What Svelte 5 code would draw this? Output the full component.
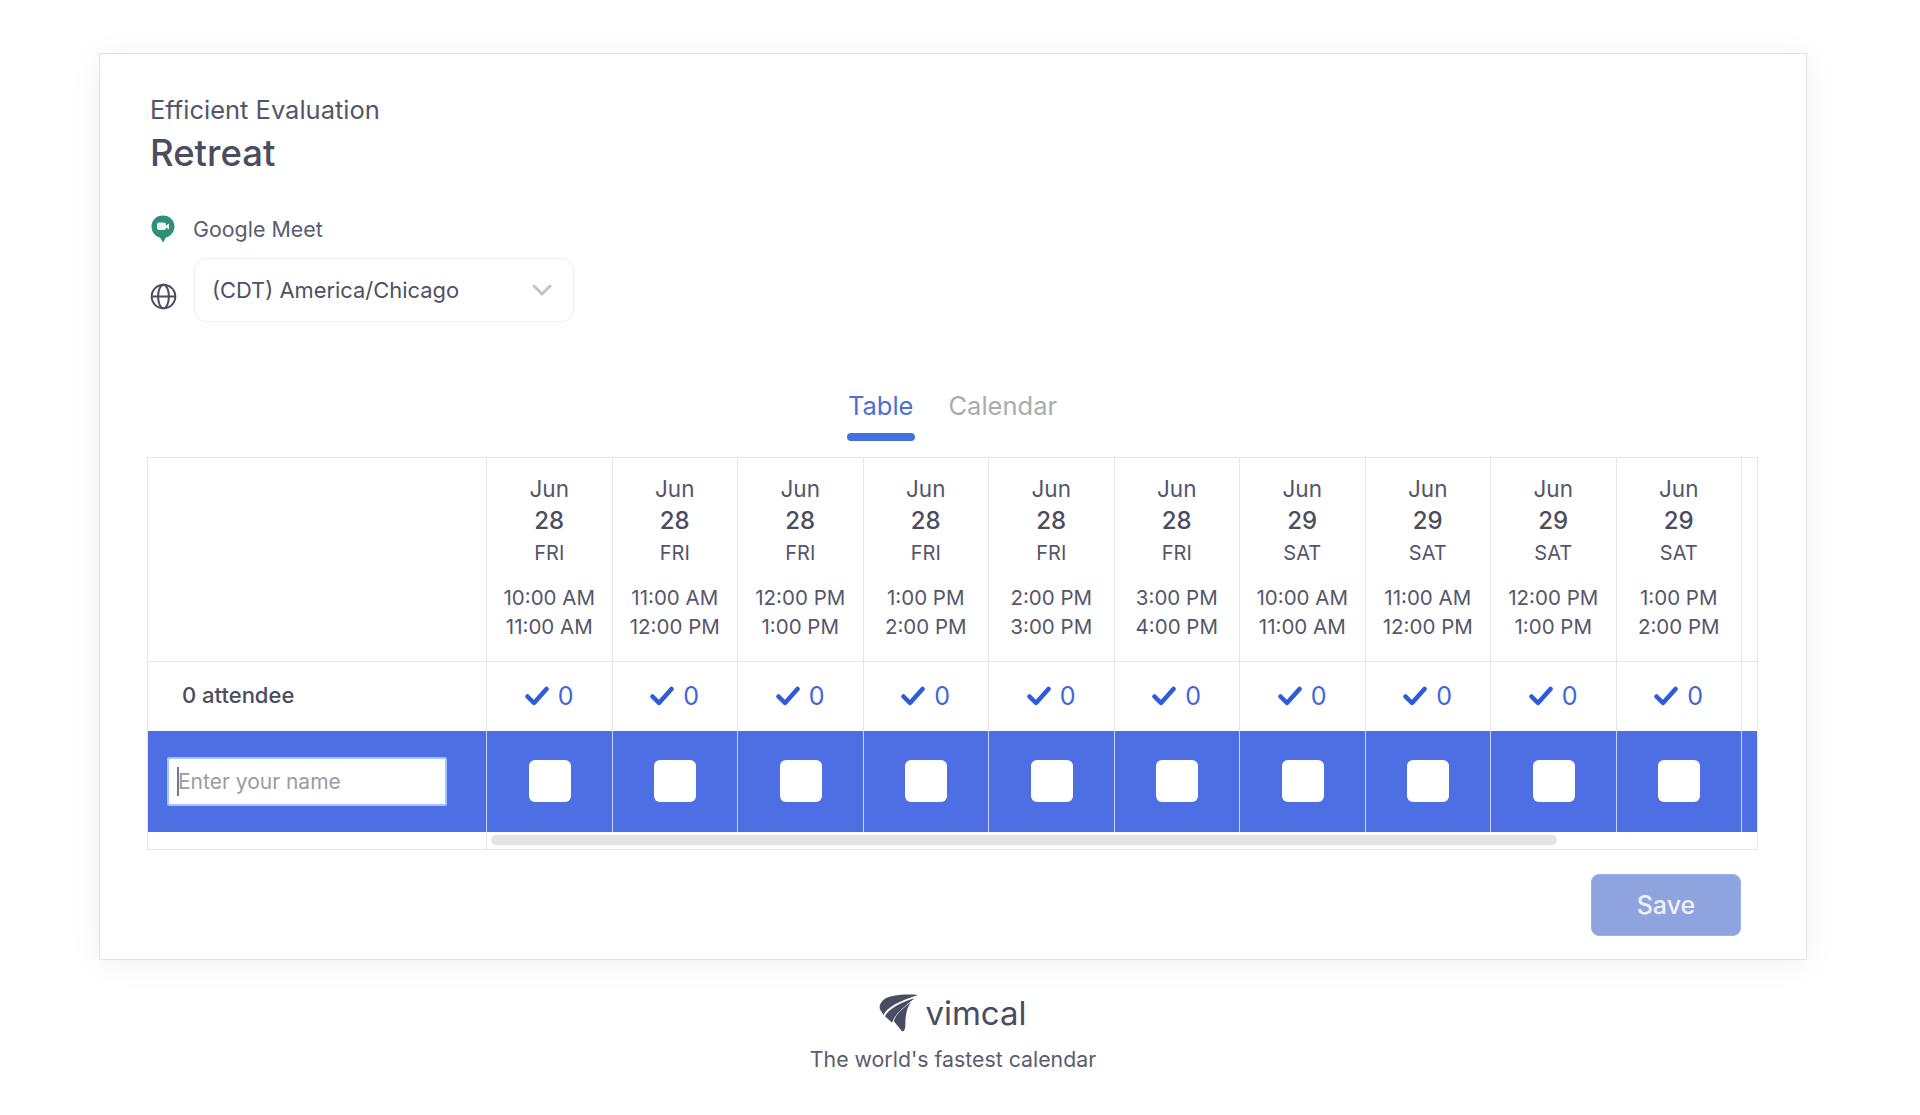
<script>
	const slots = [
		{ month: "Jun", day: 28, dow: "FRI", start: "10:00 AM", end: "11:00 AM" },
		{ month: "Jun", day: 28, dow: "FRI", start: "11:00 AM", end: "12:00 PM" },
		{ month: "Jun", day: 28, dow: "FRI", start: "12:00 PM", end: "1:00 PM" },
		{ month: "Jun", day: 28, dow: "FRI", start: "1:00 PM", end: "2:00 PM" },
		{ month: "Jun", day: 28, dow: "FRI", start: "2:00 PM", end: "3:00 PM" },
		{ month: "Jun", day: 28, dow: "FRI", start: "3:00 PM", end: "4:00 PM" },
		{ month: "Jun", day: 29, dow: "SAT", start: "10:00 AM", end: "11:00 AM" },
		{ month: "Jun", day: 29, dow: "SAT", start: "11:00 AM", end: "12:00 PM" },
		{ month: "Jun", day: 29, dow: "SAT", start: "12:00 PM", end: "1:00 PM" },
		{ month: "Jun", day: 29, dow: "SAT", start: "1:00 PM", end: "2:00 PM" }
	];
</script>

<div class="page">
	<main class="card">
		<div class="subtitle">Efficient Evaluation</div>
		<h1 class="title">Retreat</h1>

		<div class="meet">
			<svg class="meetIcon" viewBox="0 0 24 28">
				<path d="M12 0.500C5.500 0.500 0.500 5.300 0.500 11.500c0 5.600 3.900 10 8.500 11l3 5 3-5c4.800-1.200 8.500-5.500 8.500-11C23.500 5.300 18.500 0.500 12 0.500z" fill="#2f8f78" />
				<rect x="6" y="7.500" width="9" height="7.500" rx="2" fill="#eef2f1" />
				<path d="M15 10.500l3-2v6l-3-2z" fill="#eef2f1" />
			</svg>
			<span>Google Meet</span>
		</div>

		<div class="zone">
			<svg class="globe" viewBox="0 0 24 24" fill="none" stroke="#4b4c60" stroke-width="1.800">
				<circle cx="12" cy="12" r="10.500" />
				<ellipse cx="12" cy="12" rx="4.800" ry="10.500" />
				<path d="M1.500 12h21" />
			</svg>
			<div class="select">
				<span>(CDT) America/Chicago</span>
				<svg class="chevron" viewBox="0 0 20 12" fill="none" stroke="#c4c4c8" stroke-width="3" stroke-linecap="round" stroke-linejoin="round">
					<path d="M2 2l8 8 8-8" />
				</svg>
			</div>
		</div>

		<div class="tabs">
			<div class="tab active">Table</div>
			<div class="tab">Calendar</div>
		</div>

		<div class="table">
			<div class="row headRow">
				<div class="cell"></div>
				{#each slots as slot}
					<div class="cell head">
						<div class="month">{slot.month}</div>
						<div class="day">{slot.day}</div>
						<div class="dow">{slot.dow}</div>
						<div class="time">{slot.start}</div>
						<div class="time">{slot.end}</div>
					</div>
				{/each}
				<div class="cell last"></div>
			</div>

			<div class="row countRow">
				<div class="cell attendees">0 attendee</div>
				{#each slots as slot}
					<div class="cell count">
						<svg class="check" viewBox="0 0 24 20" fill="none" stroke="#2e5bd8" stroke-width="4.500" stroke-linecap="round" stroke-linejoin="round">
							<path d="M2.500 10.500l6.500 6.500L21.500 3" />
						</svg>
						<span>0</span>
					</div>
				{/each}
				<div class="cell last"></div>
			</div>

			<div class="row inputRow">
				<div class="cell nameCell">
					<div class="nameBox">
						<input class="name" placeholder="Enter your name" />
						<span class="caret"></span>
					</div>
				</div>
				{#each slots as slot}
					<div class="cell pick"><span class="box"></span></div>
				{/each}
				<div class="cell last"></div>
			</div>

			<div class="row scrollRow">
				<div class="cell"></div>
				<div class="track"><div class="thumb"></div></div>
			</div>
		</div>

		<div class="actions">
			<button class="save">Save</button>
		</div>
	</main>

	<footer class="footer">
		<div class="brand">
			<svg class="logo" viewBox="0 0 117 112" fill="#4a4c63">
				<path d="M117 2C80-1 32 1 13 17 3 26-1 37 4 47l10 15C22 40 62 19 117 2z" />
				<path d="M107 12C66 24 28 44 18 66l21 19C46 62 72 40 107 12z" />
				<path d="M96 24C74 40 52 58 44 80l25 31c8 0 10-8 10-20 0-31 5-51 17-67z" />
			</svg>
			<span>vimcal</span>
		</div>
		<div class="tagline">The world's fastest calendar</div>
	</footer>
</div>

<style>
	:global(body) {
		background: #fff;
		font-family: Inter, "Liberation Sans", sans-serif;
		color: #4b4c60;
	}

	.page {
		height: 1115px;
		padding: 53px 113px 0 99px;
		box-sizing: border-box;
		overflow: hidden;
	}

	.card {
		height: 907px;
		box-sizing: border-box;
		padding: 40px 49px 0 48px;
		border: 1px solid #e2e2e4;
		background: #fff;
		box-shadow: 0 4px 32px rgba(0, 0, 0, 0.06);
	}

	.subtitle {
		font-size: 25.500px;
		line-height: 32px;
		margin-left: 2px;
		color: #55566a;
	}

	.title {
		margin: 6px 0 0 2px;
		font-size: 36.500px;
		line-height: 42px;
		font-weight: 500;
		color: #4b4c60;
	}

	.meet {
		display: flex;
		align-items: center;
		gap: 18px;
		margin: 41px 0 0 3px;
		font-size: 21.400px;
		line-height: 28px;
		color: #5b5c6e;
	}

	.meetIcon {
		width: 24px;
		height: 28px;
	}

	.zone {
		display: flex;
		align-items: center;
		gap: 17px;
		margin: 15px 0 0 2px;
	}

	.globe {
		width: 27px;
		height: 27px;
		margin-top: 12px;
	}

	.select {
		width: 380px;
		height: 64px;
		box-sizing: border-box;
		display: flex;
		align-items: center;
		justify-content: space-between;
		padding: 0 21px 0 17px;
		border: 1px solid #efeff1;
		border-radius: 12px;
		font-size: 21.900px;
		color: #4f5063;
	}

	.chevron {
		width: 20px;
		height: 12px;
	}

	.tabs {
		display: flex;
		justify-content: center;
		gap: 35px;
		margin-top: 56px;
	}

	.tab {
		position: relative;
		height: 62px;
		font-size: 25.500px;
		line-height: 56px;
		color: #ababae;
	}

	.tab.active {
		color: #4a6fd8;
	}

	.tab.active::after {
		content: "";
		position: absolute;
		left: -1px;
		right: -2px;
		bottom: -1px;
		height: 8px;
		border-radius: 4px;
		background: #4470e0;
	}

	.table {
		width: 1609px;
		margin: 17px 0 0 -1px;
		border: 1px solid #e6e6e8;
	}

	.row {
		display: grid;
		grid-template-columns: 339px repeat(10, 125.500px) 1fr;
	}

	.cell {
		box-sizing: border-box;
		border-right: 1px solid #e6e6e8;
	}

	.cell.last {
		border-right: 0;
	}

	.headRow {
		height: 203px;
		border-bottom: 1px solid #e6e6e8;
	}

	.head {
		padding-top: 15px;
		text-align: center;
		color: #55566a;
	}

	.month {
		font-size: 22.500px;
		line-height: 31px;
	}

	.day {
		font-size: 24px;
		line-height: 33px;
		font-weight: 500;
		color: #4b4c60;
	}

	.dow {
		font-size: 20px;
		line-height: 33px;
		margin-bottom: 14px;
	}

	.time {
		font-size: 20.500px;
		line-height: 28.500px;
	}

	.countRow {
		height: 69px;
	}

	.attendees {
		padding-left: 34px;
		font-size: 22px;
		line-height: 66px;
		font-weight: 500;
	}

	.count {
		display: flex;
		align-items: center;
		justify-content: center;
		gap: 9px;
		padding-bottom: 2px;
		font-size: 25px;
		color: #3f66d9;
	}

	.check {
		width: 24px;
		height: 20px;
	}

	.inputRow {
		height: 101px;
		background: #4e6fe3;
	}

	.inputRow .cell {
		border-right-color: #c9d3f6;
		display: flex;
		align-items: center;
	}

	.inputRow .cell.last {
		border-right: 0;
	}

	.nameCell {
		padding-left: 19px;
	}

	.nameBox {
		position: relative;
		width: 280px;
		height: 49px;
	}

	.name {
		width: 100%;
		height: 100%;
		box-sizing: border-box;
		padding: 0 9px;
		border: 2px solid #a0c4ff;
		border-radius: 2px;
		background: #fff;
		font: 21px Inter, "Liberation Sans", sans-serif;
		outline: none;
	}

	.name::placeholder {
		color: #9b9ba3;
		opacity: 1;
	}

	.caret {
		position: absolute;
		left: 10px;
		top: 10px;
		width: 2px;
		height: 29px;
		background: #77778a;
	}

	.pick {
		justify-content: center;
		padding-left: 1px;
	}

	.box {
		width: 42px;
		height: 42px;
		border-radius: 6px;
		background: #fff;
		margin-bottom: 2px;
	}

	.scrollRow {
		height: 17px;
	}

	.track {
		grid-column: 2 / -1;
		padding: 3px 0 0 4px;
	}

	.thumb {
		width: 1066px;
		height: 10px;
		border-radius: 5px;
		background: #e4e4e5;
	}

	.actions {
		display: flex;
		justify-content: flex-end;
		width: 1593px;
		margin-top: 24px;
	}

	.save {
		width: 150px;
		height: 62px;
		border: 1px solid #9db0e4;
		border-radius: 8px;
		background: #8fa4de;
		color: #eef1fb;
		font: 500 25px Inter, "Liberation Sans", sans-serif;
	}

	.footer {
		display: flex;
		flex-direction: column;
		align-items: center;
	}

	.brand {
		display: flex;
		align-items: center;
		gap: 7px;
		margin-top: 33px;
		font-size: 33px;
		line-height: 40px;
		font-weight: 400;
		color: #4a4c63;
	}

	.logo {
		width: 39px;
		height: 38px;
	}

	.tagline {
		margin-top: 12px;
		font-size: 21.300px;
		line-height: 28px;
		color: #5b5c6e;
	}
</style>
